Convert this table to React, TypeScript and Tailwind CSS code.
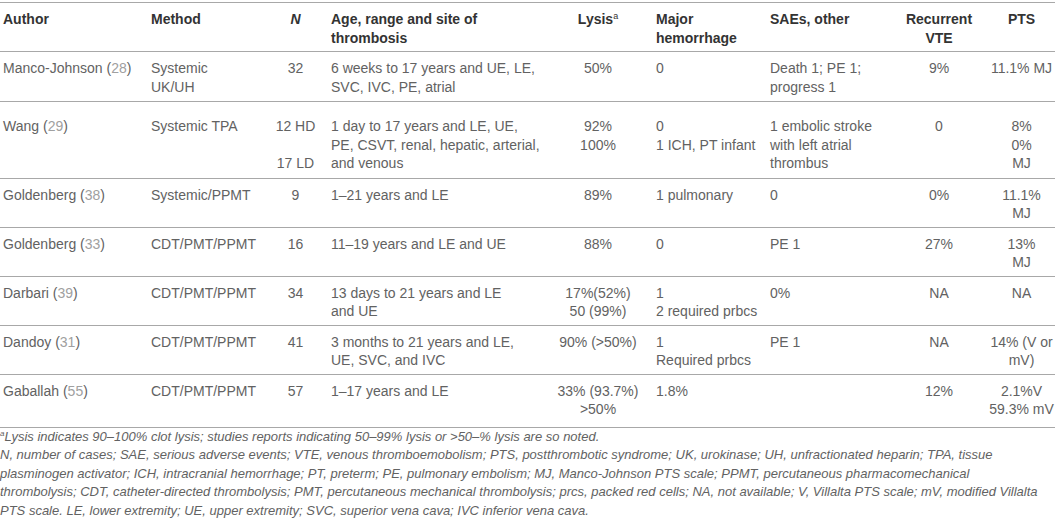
import type { ReactNode } from 'react';

// Thrombolysis outcomes table — nine columns, ruled rows, italic footnote.

type Row = {
  author: string;
  ref: string;
  method: string;
  n: ReactNode;
  age: ReactNode;
  lysis: ReactNode;
  major: ReactNode;
  saes: ReactNode;
  recurrent: string;
  pts: ReactNode;
  pad?: string;
};

const lines = (...xs: string[]) => (
  <>
    {xs.map((x, i) => (
      <div key={i} className="min-h-[18.5px]">{x}</div>
    ))}
  </>
);

const ROWS: Row[] = [
  {
    author: 'Manco-Johnson',
    ref: '28',
    method: 'Systemic UK/UH',
    n: '32',
    age: lines('6 weeks to 17 years and UE, LE,', 'SVC, IVC, PE, atrial'),
    lysis: '50%',
    major: '0',
    saes: lines('Death 1; PE 1;', 'progress 1'),
    recurrent: '9%',
    pts: '11.1% MJ',
    pad: 'pt-[7px] pb-[5px]',
  },
  {
    author: 'Wang',
    ref: '29',
    method: 'Systemic TPA',
    n: lines('12 HD', '', '17 LD'),
    age: lines('1 day to 17 years and LE, UE,', 'PE, CSVT, renal, hepatic, arterial,', 'and venous'),
    lysis: lines('92%', '100%'),
    major: lines('0', '1 ICH, PT infant'),
    saes: lines('1 embolic stroke', 'with left atrial', 'thrombus'),
    recurrent: '0',
    pts: lines('8%', '0%', 'MJ'),
    pad: 'pt-[15px] pb-[5px]',
  },
  {
    author: 'Goldenberg',
    ref: '38',
    method: 'Systemic/PPMT',
    n: '9',
    age: '1–21 years and LE',
    lysis: '89%',
    major: '1 pulmonary',
    saes: '0',
    recurrent: '0%',
    pts: lines('11.1%', 'MJ'),
  },
  {
    author: 'Goldenberg',
    ref: '33',
    method: 'CDT/PMT/PPMT',
    n: '16',
    age: '11–19 years and LE and UE',
    lysis: '88%',
    major: '0',
    saes: 'PE 1',
    recurrent: '27%',
    pts: lines('13%', 'MJ'),
  },
  {
    author: 'Darbari',
    ref: '39',
    method: 'CDT/PMT/PPMT',
    n: '34',
    age: lines('13 days to 21 years and LE', 'and UE'),
    lysis: lines('17%(52%)', '50 (99%)'),
    major: lines('1', '2 required prbcs'),
    saes: '0%',
    recurrent: 'NA',
    pts: 'NA',
  },
  {
    author: 'Dandoy',
    ref: '31',
    method: 'CDT/PMT/PPMT',
    n: '41',
    age: lines('3 months to 21 years and LE,', 'UE, SVC, and IVC'),
    lysis: '90% (>50%)',
    major: lines('1', 'Required prbcs'),
    saes: 'PE 1',
    recurrent: 'NA',
    pts: lines('14% (V or', 'mV)'),
  },
  {
    author: 'Gaballah',
    ref: '55',
    method: 'CDT/PMT/PPMT',
    n: '57',
    age: '1–17 years and LE',
    lysis: lines('33% (93.7%)', '>50%'),
    major: '1.8%',
    saes: '',
    recurrent: '12%',
    pts: lines('2.1%V', '59.3% mV'),
    pad: 'pt-[7px] pb-[8px]',
  },
];

const GRID =
  'grid grid-cols-[151px_99px_81px_219px_96px_124px_120px_95px_70px] border-b border-[#a8a8a8]';

export default function App() {
  return (
    <div className="w-[1055px] h-[520px] bg-white overflow-hidden font-['Liberation_Sans',Arial,sans-serif] text-[14px] leading-[18.5px] text-[#626262]">
      <div className="mt-[2px] border-t border-[#a8a8a8]">
        {/* header */}
        <div className={GRID + ' pt-[7px] pb-[4px] font-bold text-[#333]'}>
          <div className="pl-[3px]">Author</div>
          <div>Method</div>
          <div className="text-center pl-[10px] italic">N</div>
          <div>
            <div>Age, range and site of</div>
            <div>thrombosis</div>
          </div>
          <div className="text-center">
            Lysis<sup className="text-[9px] font-normal -top-[5px]">a</sup>
          </div>
          <div className="pl-[10px]">
            <div>Major</div>
            <div>hemorrhage</div>
          </div>
          <div>SAEs, other</div>
          <div className="text-center pl-[3px]">
            <div>Recurrent</div>
            <div>VTE</div>
          </div>
          <div className="text-center pl-[3px]">PTS</div>
        </div>

        {ROWS.map((r, i) => (
          <div key={i} className={GRID + ' ' + (r.pad ?? 'pt-[7px] pb-[4px]')}>
            <div className="pl-[3px]">
              {r.author} (<span className="text-[#a0a0a0]">{r.ref}</span>)
            </div>
            <div className="pr-[10px]">{r.method}</div>
            <div className="text-center pl-[10px]">{r.n}</div>
            <div>{r.age}</div>
            <div className="text-center">{r.lysis}</div>
            <div className="pl-[10px]">{r.major}</div>
            <div>{r.saes}</div>
            <div className="text-center pl-[3px]">{r.recurrent}</div>
            <div className="text-center pl-[3px]">{r.pts}</div>
          </div>
        ))}
      </div>

      <div className="italic text-[13px] leading-[18.5px]">
        <div>
          <sup className="text-[8px] -top-[5px]">a</sup>Lysis indicates 90–100% clot lysis; studies reports indicating 50–99% lysis or &gt;50–% lysis are so noted.
        </div>
        <div>
          N, number of cases; SAE, serious adverse events; VTE, venous thromboemobolism; PTS, postthrombotic syndrome; UK, urokinase; UH, unfractionated heparin; TPA, tissue
        </div>
        <div>
          plasminogen activator; ICH, intracranial hemorrhage; PT, preterm; PE, pulmonary embolism; MJ, Manco-Johnson PTS scale; PPMT, percutaneous pharmacomechanical
        </div>
        <div>
          thrombolysis; CDT, catheter-directed thrombolysis; PMT, percutaneous mechanical thrombolysis; prcs, packed red cells; NA, not available; V, Villalta PTS scale; mV, modified Villalta
        </div>
        <div>PTS scale. LE, lower extremity; UE, upper extremity; SVC, superior vena cava; IVC inferior vena cava.</div>
      </div>
    </div>
  );
}
